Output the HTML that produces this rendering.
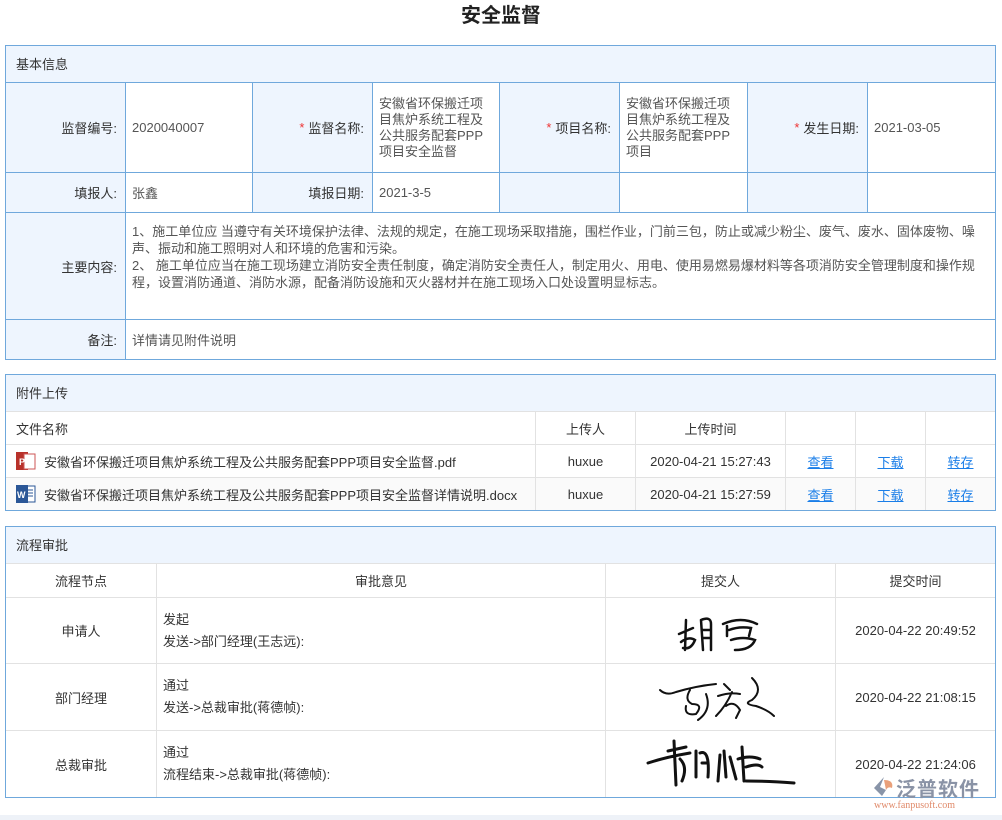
<!DOCTYPE html>
<html><head><meta charset="utf-8"><style>
*{margin:0;padding:0;box-sizing:border-box}
body{width:1002px;height:820px;background:#fff;font-family:"Liberation Sans","Noto Sans CJK SC",sans-serif;font-size:13px;color:#333;position:relative;overflow:hidden}
.a{position:absolute}
.title{left:0;width:1002px;top:2px;text-align:center;font-size:20px;font-weight:bold;color:#222;line-height:28px}
.box{position:absolute;border:1px solid #6fa8dc}
.hd{position:absolute;left:0;right:0;top:0;height:37px;background:#eef5fe;line-height:37px;padding-left:10px;color:#333}
.c{position:absolute;display:flex;align-items:center}
.lab{background:#eef5fe;justify-content:flex-end;padding-right:8px}
.val{padding-left:6px;color:#555}
.bl{border-right:1px solid #6fa8dc;border-bottom:1px solid #6fa8dc}
.g{border-right:1px solid #e2e2e2;border-bottom:1px solid #e2e2e2;justify-content:center}
.lk{color:#1a7ee8;text-decoration:underline}
.red{color:#e33;margin-right:4px}
</style></head><body>
<div class="a title">安全监督</div>

<div class="box" style="left:5px;top:45px;width:991px;height:315px">
<div class="hd" style="border-bottom:1px solid #6fa8dc">基本信息</div>
<div class="c lab bl" style="left:0;top:37px;width:120px;height:90px">监督编号:</div>
<div class="c val bl" style="left:120px;top:37px;width:127px;height:90px">2020040007</div>
<div class="c lab bl" style="left:247px;top:37px;width:120px;height:90px"><span class="red">*</span>监督名称:</div>
<div class="c val bl" style="left:367px;top:37px;width:127px;height:90px;line-height:16px;padding-right:4px">安徽省环保搬迁项目焦炉系统工程及公共服务配套PPP项目安全监督</div>
<div class="c lab bl" style="left:494px;top:37px;width:120px;height:90px"><span class="red">*</span>项目名称:</div>
<div class="c val bl" style="left:614px;top:37px;width:128px;height:90px;line-height:16px;padding-right:6px">安徽省环保搬迁项目焦炉系统工程及公共服务配套PPP项目</div>
<div class="c lab bl" style="left:742px;top:37px;width:120px;height:90px"><span class="red">*</span>发生日期:</div>
<div class="c val" style="left:862px;top:37px;width:127px;height:90px;border-bottom:1px solid #6fa8dc">2021-03-05</div>
<div class="c lab bl" style="left:0;top:127px;width:120px;height:40px">填报人:</div>
<div class="c val bl" style="left:120px;top:127px;width:127px;height:40px">张鑫</div>
<div class="c lab bl" style="left:247px;top:127px;width:120px;height:40px">填报日期:</div>
<div class="c val bl" style="left:367px;top:127px;width:127px;height:40px">2021-3-5</div>
<div class="c bl" style="left:494px;top:127px;width:120px;height:40px;background:#eef5fe"></div>
<div class="c bl" style="left:614px;top:127px;width:128px;height:40px"></div>
<div class="c bl" style="left:742px;top:127px;width:120px;height:40px;background:#eef5fe"></div>
<div class="c" style="left:862px;top:127px;width:127px;height:40px;border-bottom:1px solid #6fa8dc"></div>
<div class="c lab bl" style="left:0;top:167px;width:120px;height:107px">主要内容:</div>
<div class="a val" style="left:120px;top:167px;width:869px;height:107px;border-bottom:1px solid #6fa8dc;padding:10px 8px 0 6px;line-height:17px">1、施工单位应 当遵守有关环境保护法律、法规的规定，在施工现场采取措施，围栏作业，门前三包，防止或减少粉尘、废气、废水、固体废物、噪声、振动和施工照明对人和环境的危害和污染。<br>2、 施工单位应当在施工现场建立消防安全责任制度，确定消防安全责任人，制定用火、用电、使用易燃易爆材料等各项消防安全管理制度和操作规程，设置消防通道、消防水源，配备消防设施和灭火器材并在施工现场入口处设置明显标志。</div>
<div class="c lab" style="left:0;top:274px;width:120px;height:39px;border-right:1px solid #6fa8dc">备注:</div>
<div class="c val" style="left:120px;top:274px;width:869px;height:39px">详情请见附件说明</div>
</div>

<div class="box" style="left:5px;top:374px;width:991px;height:137px">
<div class="hd" style="border-bottom:1px solid #e2e2e2">附件上传</div>
<div class="c g" style="left:0;top:37px;width:530px;height:33px;justify-content:flex-start;padding-left:10px">文件名称</div>
<div class="c g" style="left:530px;top:37px;width:100px;height:33px">上传人</div>
<div class="c g" style="left:630px;top:37px;width:150px;height:33px">上传时间</div>
<div class="c g" style="left:780px;top:37px;width:70px;height:33px"></div>
<div class="c g" style="left:850px;top:37px;width:70px;height:33px"></div>
<div class="c g" style="left:920px;top:37px;width:69px;height:33px;border-right:0"></div>

<div class="c g" style="left:0;top:70px;width:530px;height:33px;justify-content:flex-start;padding-left:10px"><svg width="20" height="20" style="margin-right:8px"><rect x="0" y="1" width="12" height="18" fill="#b8322b"/><rect x="8" y="3" width="11" height="15" fill="#fff" stroke="#c55" stroke-width="1"/><text x="3" y="14" font-size="9" fill="#fff" font-family="Liberation Sans" font-weight="bold">P</text></svg>安徽省环保搬迁项目焦炉系统工程及公共服务配套PPP项目安全监督.pdf</div>
<div class="c g" style="left:530px;top:70px;width:100px;height:33px">huxue</div>
<div class="c g" style="left:630px;top:70px;width:150px;height:33px">2020-04-21 15:27:43</div>
<div class="c g" style="left:780px;top:70px;width:70px;height:33px"><span class="lk">查看</span></div>
<div class="c g" style="left:850px;top:70px;width:70px;height:33px"><span class="lk">下载</span></div>
<div class="c g" style="left:920px;top:70px;width:69px;height:33px;border-right:0"><span class="lk">转存</span></div>

<div class="c g" style="left:0;top:103px;width:530px;height:32px;justify-content:flex-start;padding-left:10px;background:#fafafa;border-bottom:0"><svg width="20" height="20" style="margin-right:8px"><rect x="8" y="2" width="11" height="16" fill="#fff" stroke="#2b5797"/><line x1="11" y1="6" x2="17" y2="6" stroke="#2b5797"/><line x1="11" y1="9" x2="17" y2="9" stroke="#2b5797"/><line x1="11" y1="12" x2="17" y2="12" stroke="#2b5797"/><rect x="0" y="1" width="12" height="18" fill="#2b5797"/><text x="1" y="14" font-size="9" fill="#fff" font-family="Liberation Sans" font-weight="bold">W</text></svg>安徽省环保搬迁项目焦炉系统工程及公共服务配套PPP项目安全监督详情说明.docx</div>
<div class="c g" style="left:530px;top:103px;width:100px;height:32px;background:#fafafa;border-bottom:0">huxue</div>
<div class="c g" style="left:630px;top:103px;width:150px;height:32px;background:#fafafa;border-bottom:0">2020-04-21 15:27:59</div>
<div class="c g" style="left:780px;top:103px;width:70px;height:32px;background:#fafafa;border-bottom:0"><span class="lk">查看</span></div>
<div class="c g" style="left:850px;top:103px;width:70px;height:32px;background:#fafafa;border-bottom:0"><span class="lk">下载</span></div>
<div class="c g" style="left:920px;top:103px;width:69px;height:32px;background:#fafafa;border:0"><span class="lk">转存</span></div>
</div>

<div class="box" style="left:5px;top:526px;width:991px;height:272px">
<div class="hd" style="border-bottom:1px solid #e2e2e2">流程审批</div>
<div class="c g" style="left:0;top:37px;width:151px;height:34px">流程节点</div>
<div class="c g" style="left:151px;top:37px;width:449px;height:34px">审批意见</div>
<div class="c g" style="left:600px;top:37px;width:230px;height:34px">提交人</div>
<div class="c g" style="left:830px;top:37px;width:159px;height:34px;border-right:0">提交时间</div>

<div class="c g" style="left:0;top:71px;width:151px;height:66px">申请人</div>
<div class="c g" style="left:151px;top:71px;width:449px;height:66px;justify-content:flex-start;padding-left:6px;line-height:22px;color:#333">发起<br>发送-&gt;部门经理(王志远):</div>
<div class="c g" style="left:600px;top:71px;width:230px;height:66px"><svg width="100" height="50" viewBox="0 0 100 50" fill="none" stroke="#111" stroke-width="2.5" stroke-linecap="round"><path d="M8 28 L22 22 M15 14 L14 44 M10 36 Q18 30 24 34 Q20 44 12 42 M30 14 L32 44 M30 14 Q40 10 40 18 L40 44 M32 24 L40 24 M32 32 L40 32 M52 18 Q70 10 86 18 M56 20 L56 30 M58 24 Q68 20 80 22 L78 30 M60 34 Q72 30 84 34 Q80 44 64 44"/></svg></div>
<div class="c g" style="left:830px;top:71px;width:159px;height:66px;border-right:0">2020-04-22 20:49:52</div>

<div class="c g" style="left:0;top:137px;width:151px;height:67px">部门经理</div>
<div class="c g" style="left:151px;top:137px;width:449px;height:67px;justify-content:flex-start;padding-left:6px;line-height:22px;color:#333">通过<br>发送-&gt;总裁审批(蒋德帧):</div>
<div class="c g" style="left:600px;top:137px;width:230px;height:67px"><svg width="130" height="55" viewBox="0 0 130 55" fill="none" stroke="#111" stroke-width="2" stroke-linecap="round"><path d="M4 20 Q10 26 20 22 Q40 16 60 14 M34 20 Q28 30 36 34 Q48 34 40 44 Q28 46 30 36 M50 24 Q56 40 42 50 M68 14 L74 20 M62 26 Q74 22 84 24 M76 22 Q70 36 60 46 M70 36 Q78 30 84 40 L80 48 M96 8 Q108 20 96 30 Q86 34 100 36 Q112 40 118 46"/></svg></div>
<div class="c g" style="left:830px;top:137px;width:159px;height:67px;border-right:0">2020-04-22 21:08:15</div>

<div class="c g" style="left:0;top:204px;width:151px;height:66px;border-bottom:0">总裁审批</div>
<div class="c g" style="left:151px;top:204px;width:449px;height:66px;justify-content:flex-start;padding-left:6px;line-height:22px;color:#333;border-bottom:0">通过<br>流程结束-&gt;总裁审批(蒋德帧):</div>
<div class="c g" style="left:600px;top:204px;width:230px;height:66px;border-bottom:0"><svg width="150" height="55" viewBox="0 0 150 55" fill="none" stroke="#111" stroke-width="3" stroke-linecap="round"><path d="M2 26 Q20 20 44 16 M28 4 L30 48 M22 14 L40 10 M34 22 Q42 30 36 44 M50 14 L50 40 M54 16 Q64 12 62 40 M56 26 L62 26 M74 18 L72 44 M78 14 L80 40 M84 20 L90 42 M96 10 L98 44 M92 22 Q104 18 114 22 M100 30 Q112 26 116 30 M100 44 Q120 44 148 46"/></svg></div>
<div class="c g" style="left:830px;top:204px;width:159px;height:66px;border:0">2020-04-22 21:24:06</div>
</div>

<div class="a" style="left:872px;top:776px;width:125px;height:40px">
<svg class="a" style="left:0;top:0" width="24" height="22"><path d="M12 1 L2 12 L10 20 L14 14 L8 11 Z" fill="#8894a8"/><path d="M12 4 Q22 4 20 12 Q16 10 14 14 Z" fill="#e9a07a"/></svg>
<div class="a" style="left:24px;top:-3px;font-size:20px;color:#8a93a6;font-weight:bold;letter-spacing:1px;white-space:nowrap">泛普软件</div>
<div class="a" style="left:2px;top:24px;font-size:10px;color:#e08a6a;font-family:'Liberation Serif',serif;white-space:nowrap">www.fanpusoft.com</div>
</div>
<div class="a" style="left:0;top:815px;width:1002px;height:5px;background:#eef2f8"></div>
</body></html>
